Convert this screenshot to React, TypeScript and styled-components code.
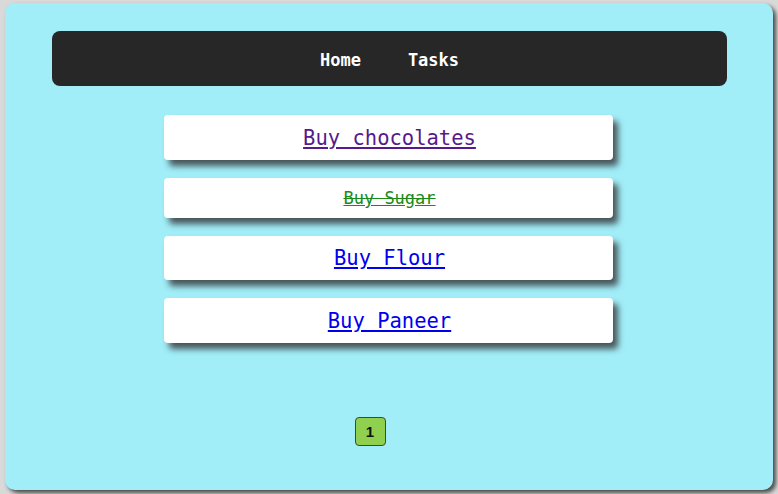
import styled, { createGlobalStyle } from 'styled-components'

const GlobalStyle = createGlobalStyle`
  html, body {
    margin: 0;
    padding: 0;
    background: #d9d9d9;
  }
  body {
    padding: 3px 0 0 5px;
    width: 778px;
    height: 494px;
    box-sizing: border-box;
    overflow: hidden;
  }
`

const Page = styled.div`
  width: 768px;
  height: 487px;
  box-sizing: border-box;
  background: #a1eef8;
  border-radius: 10px;
  box-shadow: 3px 3px 4px #4a4a4a;
  padding: 28px 46px 0 47px;
  display: flex;
  flex-direction: column;
  align-items: center;
`

const NavBar = styled.nav`
  width: 100%;
  height: 55px;
  background: #272727;
  border-radius: 8px;
  display: flex;
  align-items: center;
  justify-content: center;
  gap: 47px;
`

const NavLink = styled.span`
  color: #ffffff;
  font-family: 'DejaVu Sans Mono', monospace;
  font-weight: bold;
  font-size: 17px;
  margin-top: 2px;
`

const TaskList = styled.div`
  margin-top: 29px;
  margin-right: 2px;
  display: flex;
  flex-direction: column;
  gap: 18px;
`

const TaskCard = styled.div<{ $height: number }>`
  width: 449px;
  height: ${({ $height }) => $height}px;
  box-sizing: border-box;
  background: #ffffff;
  border-radius: 4px;
  display: flex;
  align-items: center;
  justify-content: center;
  padding-left: 2px;
  box-shadow: 5px 6px 6px #47555a;
`

const TaskLink = styled.a<{ $color: string; $done?: boolean; $size: number }>`
  font-family: 'DejaVu Sans Mono', monospace;
  font-size: ${({ $size }) => $size}px;
  color: ${({ $color }) => $color};
  text-decoration: ${({ $done }) =>
    $done ? 'underline line-through' : 'underline'};
`

const Pager = styled.div`
  margin-top: 74px;
  width: 100%;
  display: flex;
  justify-content: center;
  padding-right: 39px;
  box-sizing: border-box;
`

const PageButton = styled.button`
  width: 31px;
  height: 29px;
  background: #8fd14f;
  border: 1px solid #3d4a30;
  border-radius: 4px;
  font-family: 'Liberation Sans', Arial, sans-serif;
  font-weight: bold;
  font-size: 15px;
  color: #111;
  padding: 0;
`

const tasks = [
  { name: 'Buy chocolates', color: '#551a8b', size: 20.5, height: 45 },
  { name: 'Buy Sugar', color: '#1a8a1a', size: 17, height: 40, done: true },
  { name: 'Buy Flour', color: '#0000ee', size: 20.5, height: 44 },
  { name: 'Buy Paneer', color: '#0000ee', size: 20.5, height: 45 },
]

function App() {
  return (
    <>
      <GlobalStyle />
      <Page>
        <NavBar>
          <NavLink>Home</NavLink>
          <NavLink>Tasks</NavLink>
        </NavBar>
        <TaskList>
          {tasks.map((task) => (
            <TaskCard key={task.name} $height={task.height}>
              <TaskLink
                href="#"
                $color={task.color}
                $size={task.size}
                $done={task.done}
              >
                {task.name}
              </TaskLink>
            </TaskCard>
          ))}
        </TaskList>
        <Pager>
          <PageButton>1</PageButton>
        </Pager>
      </Page>
    </>
  )
}

export default App
